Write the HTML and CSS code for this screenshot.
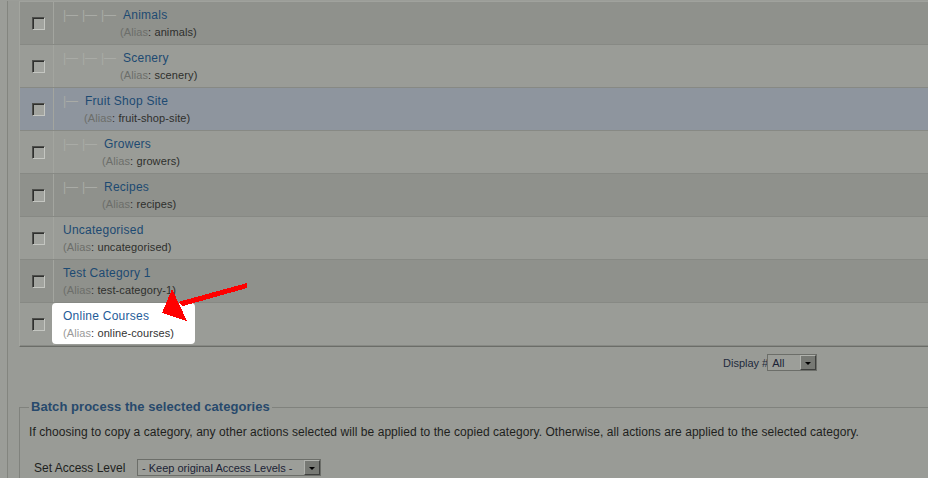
FILE: index.html
```html
<!DOCTYPE html>
<html lang="en">
<head>
<meta charset="utf-8">
<title>Categories</title>
<link rel="stylesheet" href="styles.css">
</head>
<body>
<div class="page">
  <div class="list">
    <div class="row dark">
      <div class="cb"><span class="check"></span></div>
      <div class="title lvl4">
        <div class="name"><span class="gi">|—</span><span class="gi">|—</span><span class="gi">|—</span><a href="#">Animals</a></div>
        <p class="alias"><span class="al">(Alias</span>: animals)</p>
      </div>
    </div>
    <div class="row light">
      <div class="cb"><span class="check"></span></div>
      <div class="title lvl4">
        <div class="name"><span class="gi">|—</span><span class="gi">|—</span><span class="gi">|—</span><a href="#">Scenery</a></div>
        <p class="alias"><span class="al">(Alias</span>: scenery)</p>
      </div>
    </div>
    <div class="row blue">
      <div class="cb"><span class="check"></span></div>
      <div class="title lvl2">
        <div class="name"><span class="gi">|—</span><a href="#">Fruit Shop Site</a></div>
        <p class="alias"><span class="al">(Alias</span>: fruit-shop-site)</p>
      </div>
    </div>
    <div class="row light">
      <div class="cb"><span class="check"></span></div>
      <div class="title lvl3">
        <div class="name"><span class="gi">|—</span><span class="gi">|—</span><a href="#">Growers</a></div>
        <p class="alias"><span class="al">(Alias</span>: growers)</p>
      </div>
    </div>
    <div class="row dark">
      <div class="cb"><span class="check"></span></div>
      <div class="title lvl3">
        <div class="name"><span class="gi">|—</span><span class="gi">|—</span><a href="#">Recipes</a></div>
        <p class="alias"><span class="al">(Alias</span>: recipes)</p>
      </div>
    </div>
    <div class="row light">
      <div class="cb"><span class="check"></span></div>
      <div class="title lvl1">
        <div class="name"><a href="#">Uncategorised</a></div>
        <p class="alias"><span class="al">(Alias</span>: uncategorised)</p>
      </div>
    </div>
    <div class="row dark">
      <div class="cb"><span class="check"></span></div>
      <div class="title lvl1">
        <div class="name"><a href="#">Test Category 1</a></div>
        <p class="alias"><span class="al">(Alias</span>: test-category-1)</p>
      </div>
    </div>
    <div class="row light">
      <div class="cb"><span class="check"></span></div>
      <div class="title lvl1 focus">
        <div class="spot">
          <div class="name"><a href="#">Online Courses</a></div>
          <p class="alias"><span class="al">(Alias</span>: online-courses)</p>
        </div>
      </div>
    </div>
  </div>

  <div class="pager">
    <span class="limit-label">Display #</span>
    <span class="sel sel-limit"><span class="val">All</span><span class="btn"></span></span>
  </div>

  <fieldset class="batch">
    <legend>Batch process the selected categories</legend>
    <p class="tip">If choosing to copy a category, any other actions selected will be applied to the copied category. Otherwise, all actions are applied to the selected category.</p>
    <div class="field">
      <label>Set Access Level</label>
      <span class="sel sel-access"><span class="val">- Keep original Access Levels -</span><span class="btn"></span></span>
    </div>
  </fieldset>
</div>

<svg class="arrow" width="928" height="478" viewBox="0 0 928 478" shape-rendering="crispEdges">
  <polygon points="247,283 247,288 183,306 178,302" fill="#ff0000"/>
  <polygon points="172,289 162,313 187,321" fill="#ff0000"/>
</svg>
</body>
</html>
```

FILE: styles.css
```css
html, body {
  margin: 0;
  padding: 0;
  overflow: hidden;
}
body {
  width: 928px;
  height: 478px;
  background: #9b9d98;
  font-family: "Liberation Sans", Arial, sans-serif;
  font-size: 12px;
  color: #1e1f1d;
  position: relative;
}
.page {
  margin-left: 7px;
  border-left: 1px solid #83857f;
  background: #999b96;
  padding-left: 11px;
  width: 1500px;
  min-height: 478px;
  box-sizing: border-box;
}
.list {
  margin-top: 1px;
  border-top: 1px solid #a0a29d;
  border-left: 1px solid #a3a59f;
  border-bottom: 1px solid #6b6d68;
}
.row {
  display: grid;
  grid-template-columns: 34px 1fr;
  height: 43px;
  box-sizing: border-box;
  border-bottom: 1px solid #878984;
}
.row.dark { background: #8f918c; }
.row.light { background: #9a9c97; }
.row.blue { background: #8e959e; }
.cb {
  border-right: 1px solid #a3a59f;
  display: flex;
  align-items: center;
  padding-left: 12px;
}
.check {
  width: 13px;
  height: 13px;
  box-sizing: border-box;
  border: 1px solid;
  border-color: #4e4f4c #c4c6c1 #c4c6c1 #4e4f4c;
  box-shadow: inset 1px 1px 0 #2f302e;
  background: #a2a49f;
}
.title {
  padding: 5px 0 0 9px;
}
.name {
  line-height: 16px;
  white-space: nowrap;
}
.name a {
  color: #1d4a72;
  text-decoration: none;
  letter-spacing: 0.25px;
}
.gi {
  display: inline-block;
  width: 19px;
  color: #a9aba6;
}
.gi ~ a { margin-left: 3px; }
.alias {
  margin: 2px 0 0;
  font-size: 11px;
  line-height: 14px;
  letter-spacing: 0.1px;
  color: #2e2f2c;
  white-space: nowrap;
}
.alias .al { color: #6c6e6a; }
.lvl2 .alias { padding-left: 21px; }
.lvl3 .alias { padding-left: 39px; }
.lvl4 .alias { padding-left: 57px; }

.focus { padding: 0; }
.spot {
  width: 143px;
  height: 41px;
  box-sizing: border-box;
  margin-left: -2px;
  padding: 5px 0 0 11px;
  background: #ffffff;
  border-radius: 4px;
}
.spot .name a { color: #1f5c99; }
.spot .alias { color: #333333; }
.spot .alias .al { color: #9a9a9a; }

.pager {
  display: flex;
  align-items: center;
  padding: 7px 0 0 704px;
  height: 17px;
}
.limit-label {
  flex-shrink: 0;
  white-space: nowrap;
  font-size: 11px;
  color: #1f2a3c;
  margin-right: -1px;
}
.sel {
  display: inline-flex;
  align-items: center;
  flex-shrink: 0;
  height: 17px;
  box-sizing: border-box;
  border: 1px solid #6c6e69;
  background: #9c9e99;
}
.sel .val {
  flex: 1;
  padding-left: 4px;
  font-size: 11px;
  color: #1b2336;
  white-space: nowrap;
}
.sel .btn {
  width: 16px;
  height: 15px;
  box-sizing: border-box;
  background: #777974;
  border: 1px solid;
  border-color: #b0b2ad #3f403e #3f403e #b0b2ad;
  display: flex;
  align-items: center;
  justify-content: center;
}
.sel .btn::after {
  content: "";
  margin-top: 2px;
  border-left: 3px solid transparent;
  border-right: 3px solid transparent;
  border-top: 3px solid #000;
}
.sel-limit { width: 50px; }
.sel-access { width: 184px; }

.batch {
  margin: 28px 0 0;
  padding: 0 9px;
  border: 1px solid #80827d;
  border-right: none;
  border-bottom: none;
  min-height: 100px;
}
.batch legend {
  padding: 0 2px;
  font-size: 13px;
  line-height: 16px;
  font-weight: bold;
  letter-spacing: 0.05px;
  color: #27496c;
}
.tip {
  margin: 9px 0 0;
  line-height: 16px;
  letter-spacing: 0.06px;
  color: #1e1f1d;
  white-space: nowrap;
}
.field {
  display: flex;
  align-items: center;
  margin-top: 19px;
  padding-left: 5px;
}
.field label {
  width: 103px;
  flex-shrink: 0;
  font-size: 12px;
  color: #1e1f1d;
}

.arrow {
  position: absolute;
  left: 0;
  top: 0;
  pointer-events: none;
}
```
